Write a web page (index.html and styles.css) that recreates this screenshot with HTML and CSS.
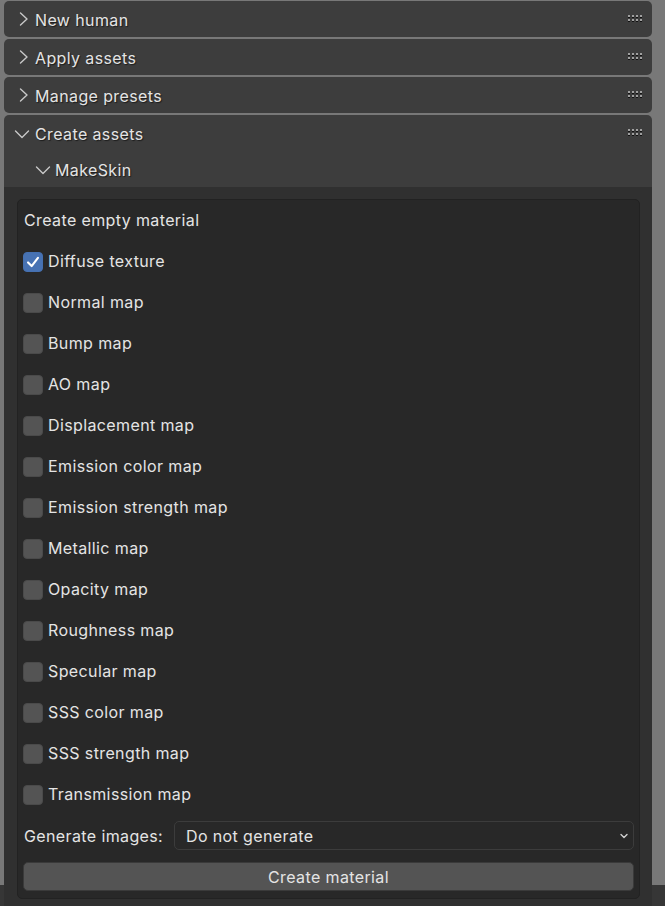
FILE: index.html
```html
<!DOCTYPE html>
<html>
<head>
<meta charset="utf-8">
<link rel="stylesheet" href="styles.css">
</head>
<body>
<div class="region">
  <div class="panel closed">
    <div class="header">
      <svg class="chev" viewBox="0 0 16 16"><path d="M4.5 2 L11 8 L4.5 14"/></svg>
      <span class="title">New human</span>
      <svg class="grip" viewBox="0 0 14 8"><g class="gl"><rect x="0" y="0" width="2" height="2"/><rect x="4" y="0" width="2" height="2"/><rect x="8" y="0" width="2" height="2"/><rect x="12" y="0" width="2" height="2"/><rect x="0" y="4" width="2" height="2"/><rect x="4" y="4" width="2" height="2"/><rect x="8" y="4" width="2" height="2"/><rect x="12" y="4" width="2" height="2"/></g><g class="gd"><rect x="0" y="2" width="2" height="1"/><rect x="4" y="2" width="2" height="1"/><rect x="8" y="2" width="2" height="1"/><rect x="12" y="2" width="2" height="1"/><rect x="0" y="6" width="2" height="1"/><rect x="4" y="6" width="2" height="1"/><rect x="8" y="6" width="2" height="1"/><rect x="12" y="6" width="2" height="1"/></g></svg>
    </div>
  </div>
  <div class="panel closed">
    <div class="header">
      <svg class="chev" viewBox="0 0 16 16"><path d="M4.5 2 L11 8 L4.5 14"/></svg>
      <span class="title">Apply assets</span>
      <svg class="grip" viewBox="0 0 14 8"><g class="gl"><rect x="0" y="0" width="2" height="2"/><rect x="4" y="0" width="2" height="2"/><rect x="8" y="0" width="2" height="2"/><rect x="12" y="0" width="2" height="2"/><rect x="0" y="4" width="2" height="2"/><rect x="4" y="4" width="2" height="2"/><rect x="8" y="4" width="2" height="2"/><rect x="12" y="4" width="2" height="2"/></g><g class="gd"><rect x="0" y="2" width="2" height="1"/><rect x="4" y="2" width="2" height="1"/><rect x="8" y="2" width="2" height="1"/><rect x="12" y="2" width="2" height="1"/><rect x="0" y="6" width="2" height="1"/><rect x="4" y="6" width="2" height="1"/><rect x="8" y="6" width="2" height="1"/><rect x="12" y="6" width="2" height="1"/></g></svg>
    </div>
  </div>
  <div class="panel closed">
    <div class="header">
      <svg class="chev" viewBox="0 0 16 16"><path d="M4.5 2 L11 8 L4.5 14"/></svg>
      <span class="title">Manage presets</span>
      <svg class="grip" viewBox="0 0 14 8"><g class="gl"><rect x="0" y="0" width="2" height="2"/><rect x="4" y="0" width="2" height="2"/><rect x="8" y="0" width="2" height="2"/><rect x="12" y="0" width="2" height="2"/><rect x="0" y="4" width="2" height="2"/><rect x="4" y="4" width="2" height="2"/><rect x="8" y="4" width="2" height="2"/><rect x="12" y="4" width="2" height="2"/></g><g class="gd"><rect x="0" y="2" width="2" height="1"/><rect x="4" y="2" width="2" height="1"/><rect x="8" y="2" width="2" height="1"/><rect x="12" y="2" width="2" height="1"/><rect x="0" y="6" width="2" height="1"/><rect x="4" y="6" width="2" height="1"/><rect x="8" y="6" width="2" height="1"/><rect x="12" y="6" width="2" height="1"/></g></svg>
    </div>
  </div>
  <div class="panel open">
    <div class="header">
      <svg class="chev down" viewBox="0 0 16 16"><path d="M1.5 6 L8 12.5 L14.5 6"/></svg>
      <span class="title">Create assets</span>
      <svg class="grip" viewBox="0 0 14 8"><g class="gl"><rect x="0" y="0" width="2" height="2"/><rect x="4" y="0" width="2" height="2"/><rect x="8" y="0" width="2" height="2"/><rect x="12" y="0" width="2" height="2"/><rect x="0" y="4" width="2" height="2"/><rect x="4" y="4" width="2" height="2"/><rect x="8" y="4" width="2" height="2"/><rect x="12" y="4" width="2" height="2"/></g><g class="gd"><rect x="0" y="2" width="2" height="1"/><rect x="4" y="2" width="2" height="1"/><rect x="8" y="2" width="2" height="1"/><rect x="12" y="2" width="2" height="1"/><rect x="0" y="6" width="2" height="1"/><rect x="4" y="6" width="2" height="1"/><rect x="8" y="6" width="2" height="1"/><rect x="12" y="6" width="2" height="1"/></g></svg>
    </div>
    <div class="subheader">
      <svg class="chev down" viewBox="0 0 16 16"><path d="M1.5 6 L8 12.5 L14.5 6"/></svg>
      <span class="title">MakeSkin</span>
    </div>
    <div class="body">
      <div class="box">
        <div class="row label">Create empty material</div>
        <div class="row check"><span class="cb on"><svg viewBox="0 0 20 20"><path d="M4.5 10.5 L8.5 14.5 L15.5 5.5"/></svg></span><span>Diffuse texture</span></div>
        <div class="row check"><span class="cb"></span><span>Normal map</span></div>
        <div class="row check"><span class="cb"></span><span>Bump map</span></div>
        <div class="row check"><span class="cb"></span><span>AO map</span></div>
        <div class="row check"><span class="cb"></span><span>Displacement map</span></div>
        <div class="row check"><span class="cb"></span><span>Emission color map</span></div>
        <div class="row check"><span class="cb"></span><span>Emission strength map</span></div>
        <div class="row check"><span class="cb"></span><span>Metallic map</span></div>
        <div class="row check"><span class="cb"></span><span>Opacity map</span></div>
        <div class="row check"><span class="cb"></span><span>Roughness map</span></div>
        <div class="row check"><span class="cb"></span><span>Specular map</span></div>
        <div class="row check"><span class="cb"></span><span>SSS color map</span></div>
        <div class="row check"><span class="cb"></span><span>SSS strength map</span></div>
        <div class="row check"><span class="cb"></span><span>Transmission map</span></div>
        <div class="row select-row">
          <span class="sel-label">Generate images:</span>
          <div class="select"><span>Do not generate</span><svg class="dd" viewBox="0 0 10 10"><path d="M2 3.5 L5 6.5 L8 3.5"/></svg></div>
        </div>
        <div class="row button-row">
          <div class="button">Create material</div>
        </div>
      </div>
    </div>
  </div>
</div>
</body>
</html>
```

FILE: styles.css
```css
html, body {
  margin: 0;
  padding: 0;
}
body {
  width: 665px;
  height: 906px;
  overflow: hidden;
  background: linear-gradient(to bottom, #787878 0, #787878 885px, #363636 885px);
  font-family: Inter, "Noto Sans", sans-serif;
  font-size: 16px;
  letter-spacing: 0.38px;
  color: #e4e4e4;
}
.region {
  width: 648px;
  margin-left: 4px;
  padding-top: 1px;
  display: flex;
  flex-direction: column;
  gap: 2px;
}
.panel {
  background: #3d3d3d;
  border-radius: 5px;
}
.panel.open {
  border-radius: 5px 5px 0 0;
}
.header, .subheader {
  height: 36px;
  display: flex;
  align-items: center;
  position: relative;
}
.title {
  text-shadow: 1px 1px 1px rgba(0,0,0,0.55);
  line-height: 1;
  padding-top: 1px;
}
.chev {
  width: 16px;
  height: 16px;
  fill: none;
  stroke: #c8c8c8;
  stroke-width: 1.4;
  stroke-linecap: round;
  stroke-linejoin: round;
  margin-left: 12px;
  margin-right: 3px;
  flex: none;
}
.chev.down {
  margin-left: 10px;
  margin-right: 5px;
}
.subheader .chev.down {
  margin-left: 31px;
  margin-right: 4px;
}
.grip {
  position: absolute;
  right: 10px;
  top: 14px;
  width: 14px;
  height: 8px;
}
.grip .gl { fill: #a0a0a0; }
.grip .gd { fill: #111; }
.body {
  background: #303030;
  padding: 12px 12px 8px 13px;
}
.box {
  background: #282828;
  border: 1px solid #222;
  border-radius: 5px;
  padding: 0 5px 1px 5px;
  display: flex;
  flex-direction: column;
}
.row {
  height: 41px;
  display: flex;
  align-items: center;
}
.row.label {
  padding-left: 1px;
  padding-bottom: 1px;
  box-sizing: border-box;
}
.check {
  gap: 5px;
  padding-bottom: 1px;
  box-sizing: border-box;
}
.cb {
  width: 20px;
  height: 20px;
  border-radius: 4px;
  background: #545454;
  box-sizing: border-box;
  border: 1px solid #4a4a4a;
  flex: none;
  display: flex;
  margin-top: 1px;
}
.cb.on {
  background: #4772b3;
  border-color: #4570b0;
}
.cb svg {
  width: 18px;
  height: 18px;
  fill: none;
  stroke: #fff;
  stroke-width: 2.4;
  stroke-linecap: round;
  stroke-linejoin: round;
}
.sel-label {
  width: 151px;
  padding-left: 1px;
  box-sizing: border-box;
  flex: none;
}
.select {
  flex: 1;
  height: 29px;
  box-sizing: border-box;
  border: 1px solid #3c3c3c;
  border-radius: 5px;
  background: #282828;
  display: flex;
  align-items: center;
  justify-content: space-between;
  padding: 0 4px 0 11px;
}
.dd {
  width: 10px;
  height: 10px;
  fill: none;
  stroke: #d0d0d0;
  stroke-width: 1.4;
  stroke-linecap: round;
  stroke-linejoin: round;
}
.button {
  flex: 1;
  height: 29px;
  box-sizing: border-box;
  background: #545454;
  border: 1px solid #3a3a3a;
  border-radius: 5px;
  display: flex;
  align-items: center;
  justify-content: center;
  color: #e4e4e4;
}
```
